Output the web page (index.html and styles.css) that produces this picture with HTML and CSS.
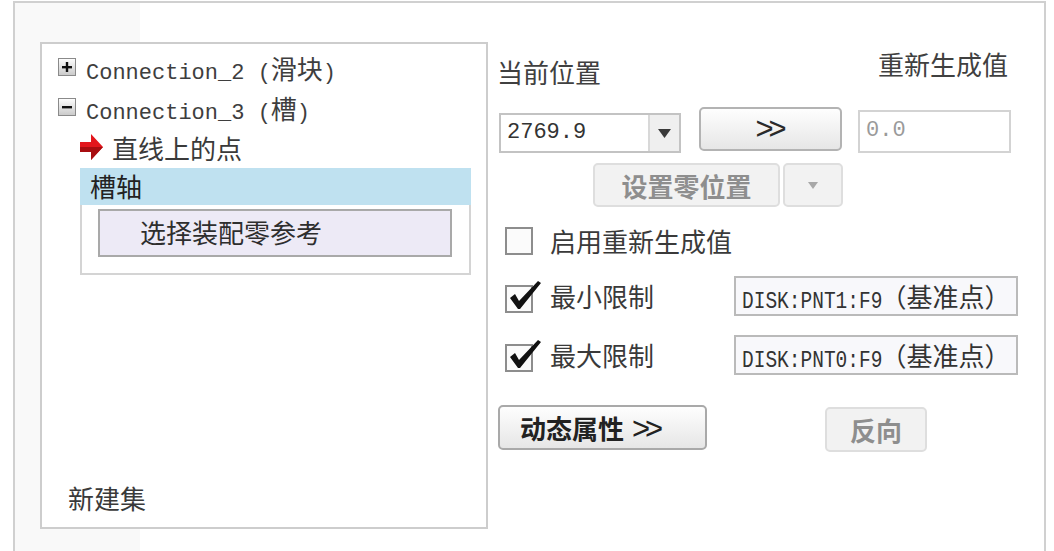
FILE: index.html
```html
<!DOCTYPE html>
<html lang="zh-CN">
<head>
  <meta charset="UTF-8">
  <title>连接 - 槽</title>
  <link rel="stylesheet" href="styles.css">
</head>
<body>
  <div class="frame">
    <div class="tree-panel">
      <div class="tree">
        <div class="node">
          <svg class="toggle" width="18" height="18" viewBox="0 0 18 18">
            <defs>
              <linearGradient id="tg" x1="0" y1="0" x2="0" y2="1">
                <stop offset="0" stop-color="#ffffff"/>
                <stop offset="1" stop-color="#c9c9c9"/>
              </linearGradient>
            </defs>
            <rect x="0.5" y="0.5" width="17" height="17" fill="url(#tg)" stroke="#8a8a8a"/>
            <rect x="4" y="8" width="10" height="2.4" fill="#111"/>
            <rect x="7.8" y="4" width="2.4" height="10" fill="#111"/>
          </svg>
          <span class="mono">Connection_2 (<span class="cjk">滑块</span>)</span>
        </div>
        <div class="node">
          <svg class="toggle" width="18" height="18" viewBox="0 0 18 18">
            <rect x="0.5" y="0.5" width="17" height="17" fill="url(#tg)" stroke="#8a8a8a"/>
            <rect x="4" y="8" width="10" height="2.4" fill="#111"/>
          </svg>
          <span class="mono">Connection_3 (<span class="cjk">槽</span>)</span>
        </div>
        <div class="node leaf">
          <svg width="24" height="26" viewBox="0 0 24 26">
            <polygon points="0,8 11,8 11,0 23,13 11,26 11,18 0,18" fill="#e3161c"/>
            <polygon points="0,13 23,13 11,26 11,18 0,18" fill="#a80d10"/>
          </svg>
          <span class="cjk">直线上的点</span>
        </div>
        <div class="group">
          <div class="group-head">槽轴</div>
          <div class="group-body">
            <div class="pick">选择装配零参考</div>
          </div>
        </div>
      </div>
      <div class="tree-foot">新建集</div>
    </div>

    <div class="side">
      <div class="side-head">
        <span class="cur-label">当前位置</span>
        <span class="regen-label">重新生成值</span>
      </div>

      <div class="pos-row">
        <div class="combo">
          <span class="combo-value">2769.9</span>
          <span class="combo-drop">
            <svg width="13" height="9" viewBox="0 0 13 9"><polygon points="0,0 13,0 6.5,9" fill="#3a3a3a"/></svg>
          </span>
        </div>
        <button class="btn btn-go">&gt;&gt;</button>
        <div class="field">0.0</div>
      </div>

      <div class="zero-row">
        <button class="btn btn-off btn-zero">设置零位置</button>
        <button class="btn btn-off btn-zero-drop">
          <svg width="10" height="7" viewBox="0 0 10 7"><polygon points="0,0 10,0 5,7" fill="#a8a8a8"/></svg>
        </button>
      </div>

      <div class="check-row">
        <svg class="check" width="38" height="34" viewBox="0 0 38 34">
          <rect x="1" y="4" width="26" height="26" fill="#fbfbfb" stroke="#8d8d8d" stroke-width="2"/>
        </svg>
        <span class="check-label">启用重新生成值</span>
      </div>

      <div class="limit-row">
        <svg class="check" width="38" height="34" viewBox="0 0 38 34">
          <rect x="1" y="7" width="26" height="26" fill="#fbfbfb" stroke="#8d8d8d" stroke-width="2"/>
          <path d="M5 19 L10 15 L14 22 L33 2 L36 4 L15 30 L13 30 Z" fill="#111"/>
        </svg>
        <span class="check-label">最小限制</span>
        <div class="ref"><span class="ref-id">DISK:PNT1:F9</span><span class="cjk">（基准点）</span></div>
      </div>

      <div class="limit-row">
        <svg class="check" width="38" height="34" viewBox="0 0 38 34">
          <rect x="1" y="7" width="26" height="26" fill="#fbfbfb" stroke="#8d8d8d" stroke-width="2"/>
          <path d="M5 19 L10 15 L14 22 L33 2 L36 4 L15 30 L13 30 Z" fill="#111"/>
        </svg>
        <span class="check-label">最大限制</span>
        <div class="ref"><span class="ref-id">DISK:PNT0:F9</span><span class="cjk">（基准点）</span></div>
      </div>

      <div class="action-row">
        <button class="btn btn-dyn">动态属性 <span class="chev">&gt;&gt;</span></button>
        <button class="btn btn-off btn-flip">反向</button>
      </div>
    </div>
  </div>
</body>
</html>
```

FILE: styles.css
```css
body {
  margin: 0;
  background: #fff;
  font-family: "Noto Sans CJK SC", sans-serif;
  color: #3a3a3a;
}
.frame {
  display: flex;
  align-items: flex-start;
  box-sizing: border-box;
  width: 1033px;
  height: 560px;
  margin: 1px 0 0 13px;
  padding: 39px 0 0 25px;
  border: 2px solid #d0d0d0;
  border-bottom: none;
  background: linear-gradient(to right, #f9f9f9 0, #f9f9f9 125px, #fff 125px);
}
.tree-panel {
  display: flex;
  flex-direction: column;
  justify-content: space-between;
  box-sizing: border-box;
  width: 448px;
  height: 487px;
  border: 2px solid #cdcdcd;
  background: #fff;
}
.tree {
  padding: 3px 15px 0 16px;
}
.node {
  display: flex;
  align-items: center;
  gap: 10px;
  height: 40px;
}
.leaf {
  gap: 8px;
  padding-left: 22px;
}
.mono {
  font-family: "Liberation Mono", "Noto Sans CJK SC", monospace;
  font-size: 22px;
  color: #3e3e3e;
}
.cjk {
  font-family: "Noto Sans CJK SC", sans-serif;
  font-size: 26px;
}
.group {
  margin: 1px 0 0 22px;
}
.group-head {
  height: 37px;
  padding-left: 10px;
  background: #bfe1f0;
  font-size: 26px;
  line-height: 35px;
  color: #222;
}
.group-body {
  box-sizing: border-box;
  height: 70px;
  padding: 4px 17px 0 16px;
  border: 2px solid #d4d4d4;
  border-top: none;
}
.pick {
  box-sizing: border-box;
  height: 48px;
  padding-left: 40px;
  border: 2px solid #a9a9a9;
  background: #edeaf6;
  font-size: 26px;
  line-height: 42px;
  color: #2e2e2e;
}
.tree-foot {
  padding: 0 0 16px 26px;
  font-size: 26px;
  line-height: 26px;
}
.side {
  width: 521px;
  margin-left: 9px;
  font-size: 26px;
  line-height: 26px;
}
.side-head {
  display: flex;
  justify-content: space-between;
  height: 48px;
}
.cur-label {
  padding-top: 17px;
  color: #404040;
}
.regen-label {
  padding-top: 9px;
  margin-right: 10px;
  color: #404040;
}
.pos-row {
  display: flex;
  align-items: flex-start;
  margin-top: 17px;
}
.combo {
  display: flex;
  box-sizing: border-box;
  width: 182px;
  height: 40px;
  margin: 6px 0 0 2px;
  border: 2px solid #c3c3c3;
  background: #fff;
}
.combo-value {
  flex: 1;
  padding-left: 6px;
  font-family: "Liberation Mono", monospace;
  font-size: 22px;
  line-height: 36px;
  color: #333;
}
.combo-drop {
  display: flex;
  align-items: center;
  justify-content: center;
  width: 29px;
  border-left: 2px solid #d8d8d8;
  background: #efefef;
}
.btn {
  box-sizing: border-box;
  padding: 0;
  border: 2px solid #b3b3b3;
  border-radius: 5px;
  background: linear-gradient(#fefefe, #e6e6e6);
  font-family: "Noto Sans CJK SC", sans-serif;
  font-size: 26px;
  color: #222;
}
.btn-go {
  width: 143px;
  height: 44px;
  margin-left: 18px;
  font-family: "Liberation Sans", sans-serif;
  font-size: 31px;
  line-height: 36px;
  letter-spacing: -5px;
  text-indent: -4px;
  color: #2a2a2a;
}
.field {
  box-sizing: border-box;
  width: 153px;
  height: 43px;
  margin: 3px 0 0 16px;
  padding-left: 6px;
  border: 2px solid #d3d3d3;
  font-family: "Liberation Mono", monospace;
  font-size: 22px;
  line-height: 38px;
  color: #9a9a9a;
}
.zero-row {
  display: flex;
  gap: 3px;
  margin: 10px 0 0 96px;
}
.btn-off {
  border-color: #dedede;
  background: #f2f2f2;
  font-weight: bold;
  color: #8e8e8e;
}
.btn-zero {
  width: 187px;
  height: 44px;
}
.btn-zero-drop {
  display: flex;
  align-items: center;
  justify-content: center;
  width: 60px;
  height: 44px;
}
.check-row {
  display: flex;
  align-items: center;
  height: 28px;
  margin: 20px 0 0 8px;
}
.check {
  flex: none;
  margin-right: 7px;
}
.check-label {
  color: #3a3a3a;
}
.limit-row {
  display: flex;
  align-items: center;
  height: 40px;
  margin: 21px 0 0 8px;
}
.limit-row + .limit-row {
  margin-top: 19px;
}
.ref {
  box-sizing: border-box;
  width: 284px;
  height: 40px;
  margin-left: auto;
  padding-left: 6px;
  border: 2px solid #bababa;
  background: #f8f8fb;
  font-family: "Liberation Mono", monospace;
  font-size: 19.5px;
  line-height: 36px;
  white-space: nowrap;
  color: #333;
}
.ref-id {
  display: inline-block;
  transform: scaleY(1.2);
}
.ref .cjk {
  font-size: 26px;
  margin-left: -2px;
}
.action-row {
  display: flex;
  align-items: flex-start;
  margin-top: 30px;
}
.btn-dyn {
  width: 209px;
  height: 45px;
  margin-left: 1px;
  padding-left: 20px;
  border-color: #a9a9a9;
  font-weight: bold;
  text-align: left;
}
.chev {
  font-family: "Liberation Sans", sans-serif;
  font-weight: normal;
  font-size: 31px;
  letter-spacing: -5px;
  margin-left: 2px;
}
.btn-flip {
  width: 102px;
  height: 45px;
  margin: 2px 0 0 118px;
}
```
